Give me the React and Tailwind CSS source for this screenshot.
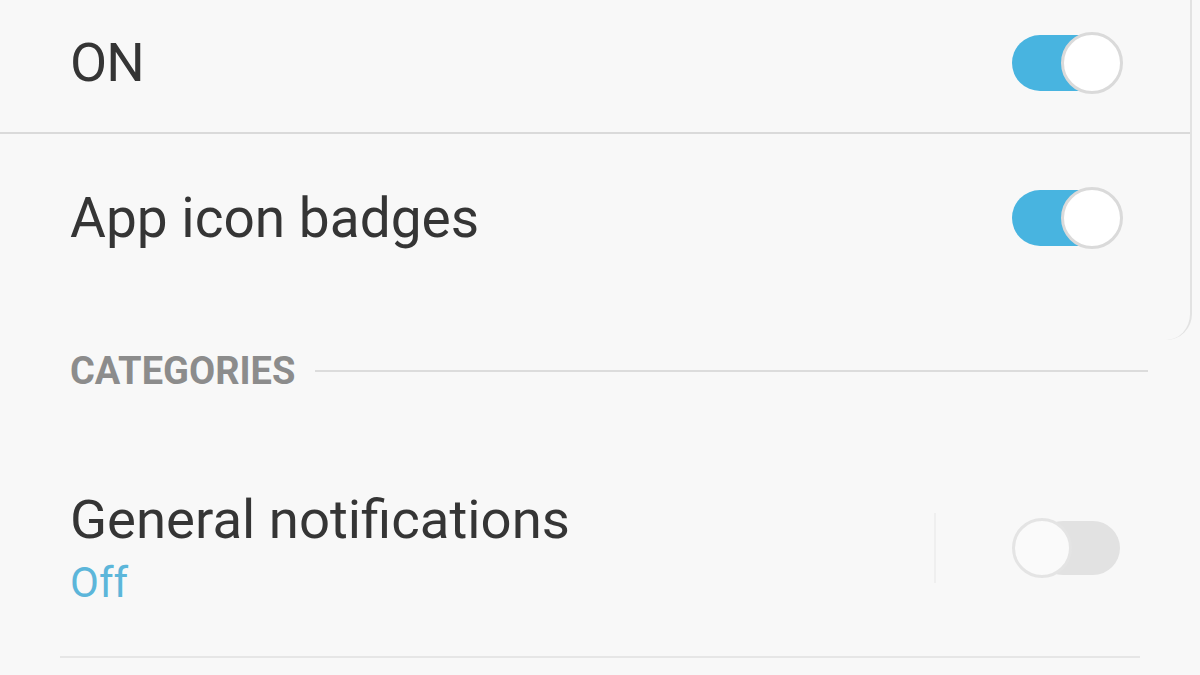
import React from 'react';

const font = { fontFamily: 'Roboto, "Noto Sans", sans-serif' };

// --- toggle switch (on = blue track, thumb right) ---
const Toggle = ({ on }) =>
  on ? (
    <div className="relative w-[111px] h-[62px] shrink-0">
      <div className="absolute left-0 top-[3px] w-[96px] h-[56px] rounded-full bg-[#48b4e0]" />
      <div className="absolute right-0 top-0 w-[62px] h-[62px] rounded-full bg-white border-[3px] border-[#dadada]" />
    </div>
  ) : (
    <div className="relative w-[108px] h-[64px] shrink-0">
      <div className="absolute right-0 top-[5px] w-[84px] h-[54px] rounded-full bg-[#e2e2e2]" />
      <div className="absolute left-0 top-[2px] w-[60px] h-[60px] rounded-full bg-[#fafafa] border-[3px] border-[#e4e4e4]" />
    </div>
  );

export default function App() {
  return (
    <div className="w-[1200px] h-[675px] overflow-hidden bg-[#f8f8f8] text-[#353535]" style={font}>
      {/* top card */}
      <div className="w-[1192px] h-[340px] border-r-2 border-[#e2e2e2] rounded-br-[26px]">
        <div className="h-[134px] flex items-center justify-between pl-[70px] pr-[67px] pb-[6px] border-b-2 border-[#dadada]">
          <span className="text-[54px] leading-[64px] tracking-[-1px]">ON</span>
          <Toggle on />
        </div>
        <div className="h-[168px] flex items-center justify-between pl-[70px] pr-[67px]">
          <span className="text-[55px] leading-[64px]">App icon badges</span>
          <Toggle on />
        </div>
      </div>

      {/* categories header */}
      <div className="h-[62px] flex items-center pl-[70px] pr-[52px]">
        <span className="text-[38px] leading-[48px] font-bold text-[#8c8c8c]">CATEGORIES</span>
        <div className="flex-1 h-[2px] ml-[20px] bg-[#dcdcdc]" />
      </div>

      {/* general notifications row */}
      <div className="mx-[60px] h-[256px] flex items-start pl-[10px] pr-[20px] pt-[85px] border-b-2 border-[#e6e6e6]">
        <div className="flex-1 flex flex-col">
          <span className="text-[54.5px] leading-[64px]">General notifications</span>
          <span className="text-[42px] leading-[64px] text-[#5cb6da]">Off</span>
        </div>
        <div className="flex items-center mt-[26px]">
          <div className="w-[2px] h-[70px] bg-[#efefef] mr-[76px]" />
          <Toggle on={false} />
        </div>
      </div>
    </div>
  );
}
